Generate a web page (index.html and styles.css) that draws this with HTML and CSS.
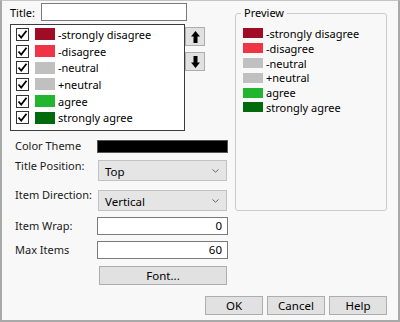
FILE: index.html
```html
<!DOCTYPE html>
<html lang="en">
<head>
    <meta charset="UTF-8">
    <title>Legend Settings</title>
    <link rel="stylesheet" href="styles.css">
</head>
<body>
    <div class="window">
        <div class="main">
            <div class="left">
                <div class="title-row">
                    <span class="title-lbl">Title:</span>
                    <span class="field title-field"></span>
                </div>
                <div class="list-row">
                    <div class="listbox">
                        <div class="item"><span class="check"><svg width="11" height="11" viewBox="0 0 11 11"><path d="M1.5 5.5 L4.2 8.5 L9.5 1.8" fill="none" stroke="#000" stroke-width="1.8"/></svg></span><span class="swatch c1"></span>-strongly disagree</div>
                        <div class="item"><span class="check"><svg width="11" height="11" viewBox="0 0 11 11"><path d="M1.5 5.5 L4.2 8.5 L9.5 1.8" fill="none" stroke="#000" stroke-width="1.8"/></svg></span><span class="swatch c2"></span>-disagree</div>
                        <div class="item"><span class="check"><svg width="11" height="11" viewBox="0 0 11 11"><path d="M1.5 5.5 L4.2 8.5 L9.5 1.8" fill="none" stroke="#000" stroke-width="1.8"/></svg></span><span class="swatch c3"></span>-neutral</div>
                        <div class="item"><span class="check"><svg width="11" height="11" viewBox="0 0 11 11"><path d="M1.5 5.5 L4.2 8.5 L9.5 1.8" fill="none" stroke="#000" stroke-width="1.8"/></svg></span><span class="swatch c3"></span>+neutral</div>
                        <div class="item"><span class="check"><svg width="11" height="11" viewBox="0 0 11 11"><path d="M1.5 5.5 L4.2 8.5 L9.5 1.8" fill="none" stroke="#000" stroke-width="1.8"/></svg></span><span class="swatch c5"></span>agree</div>
                        <div class="item"><span class="check"><svg width="11" height="11" viewBox="0 0 11 11"><path d="M1.5 5.5 L4.2 8.5 L9.5 1.8" fill="none" stroke="#000" stroke-width="1.8"/></svg></span><span class="swatch c6"></span>strongly agree</div>
                    </div>
                    <div class="arrows">
                        <span class="btn arrow"><svg width="9" height="12" viewBox="0 0 9 12"><path d="M4.5 0 L9 5.5 H6.5 V12 H2.5 V5.5 H0 Z" fill="#000"/></svg></span>
                        <span class="btn arrow"><svg width="9" height="12" viewBox="0 0 9 12"><path d="M4.5 12 L9 6.5 H6.5 V0 H2.5 V6.5 H0 Z" fill="#000"/></svg></span>
                    </div>
                </div>
                <div class="form">
                    <div class="row r-theme">
                        <span class="lbl">Color Theme</span>
                        <span class="theme-bar"></span>
                    </div>
                    <div class="row r-select r-pos">
                        <span class="lbl">Title Position:</span>
                        <span class="select">Top<svg width="7" height="4" viewBox="0 0 7 4"><path d="M0.5 0.5 L3.5 3.2 L6.5 0.5" fill="none" stroke="#666" stroke-width="1"/></svg></span>
                    </div>
                    <div class="row r-select r-dir">
                        <span class="lbl">Item Direction:</span>
                        <span class="select">Vertical<svg width="7" height="4" viewBox="0 0 7 4"><path d="M0.5 0.5 L3.5 3.2 L6.5 0.5" fill="none" stroke="#666" stroke-width="1"/></svg></span>
                    </div>
                    <div class="row r-wrap">
                        <span class="lbl">Item Wrap:</span>
                        <span class="field num">0</span>
                    </div>
                    <div class="row r-max">
                        <span class="lbl">Max Items</span>
                        <span class="field num">60</span>
                    </div>
                    <div class="row r-font">
                        <span class="btn font-btn">Font...</span>
                    </div>
                </div>
            </div>
            <fieldset class="preview">
                <legend>Preview</legend>
                <div class="pitem"><span class="pswatch c1"></span>-strongly disagree</div>
                <div class="pitem"><span class="pswatch c2"></span>-disagree</div>
                <div class="pitem"><span class="pswatch c3"></span>-neutral</div>
                <div class="pitem"><span class="pswatch c3"></span>+neutral</div>
                <div class="pitem"><span class="pswatch c5"></span>agree</div>
                <div class="pitem"><span class="pswatch c6"></span>strongly agree</div>
            </fieldset>
        </div>
        <div class="buttons">
            <span class="btn dlg">OK</span>
            <span class="btn dlg">Cancel</span>
            <span class="btn dlg">Help</span>
        </div>
    </div>
</body>
</html>
```

FILE: styles.css
```css
*{
    margin: 0;
    padding: 0;
    box-sizing: border-box;
}
body{
    font-family: "Noto Sans", "Open Sans", sans-serif;
    font-size: 11px;
    color: #000;
    background: #fff;
}
.window{
    width: 400px;
    height: 322px;
    background: #f8f8f8;
    border: 2px solid #a9a9a9;
    border-top: 1px solid #c4c4c4;
    display: flex;
    flex-direction: column;
}
.main{
    display: flex;
    align-items: flex-start;
}
.left{
    width: 233px;
}
/* title */
.title-row{
    display: flex;
    align-items: center;
    padding-top: 2px;
    padding-left: 8px;
}
.title-lbl{
    width: 31px;
}
.field{
    display: block;
    height: 18px;
    background: #fff;
    border: 1px solid #7a7a7a;
}
.title-field{
    width: 146px;
}
/* list */
.list-row{
    display: flex;
    margin-top: 3px;
    padding-left: 8px;
}
.listbox{
    width: 175px;
    height: 107px;
    background: #fff;
    border: 1px solid #3c3c3c;
    padding: 1px 0 0 5px;
}
.item{
    display: flex;
    align-items: center;
    height: 16.7px;
    white-space: nowrap;
}
.check{
    width: 13px;
    height: 13px;
    border: 1px solid #333;
    background: #fff;
    display: flex;
    align-items: center;
    justify-content: center;
    margin-right: 6px;
}
.swatch{
    width: 20px;
    height: 12px;
    margin-right: 3px;
}
.c1{ background: #9e0c25; }
.c2{ background: #ef3446; }
.c3{ background: #c0c0c0; }
.c5{ background: #22b530; }
.c6{ background: #006a0c; }
.arrows{
    display: flex;
    flex-direction: column;
    gap: 6px;
    margin-top: 3px;
}
.btn{
    display: flex;
    align-items: center;
    justify-content: center;
    background: #e1e1e1;
    border: 1px solid #adadad;
}
.arrow{
    width: 20px;
    height: 19px;
}
/* form */
.form{
    margin-top: 8px;
    padding-left: 13px;
}
.row{
    display: flex;
    align-items: center;
}
.lbl{
    width: 82px;
    line-height: 12px;
    color: #1a1a1a;
}
.r-theme{ height: 14px; }
.theme-bar{
    width: 131px;
    height: 13px;
    background: #000;
    border: 1px solid #555;
}
.r-select{
    align-items: flex-start;
}
.r-pos{ margin-top: 7px; }
.r-dir{ margin-top: 9px; }
.r-dir .lbl{ margin-top: -1px; }
.select{
    display: flex;
    align-items: center;
    justify-content: space-between;
    width: 129px;
    height: 21px;
    margin-left: 1px;
    padding: 1px 7px 0 6px;
    background: #e5e5e5;
    border: 1px solid #c2c2c2;
    font-size: 11.5px;
}
.r-wrap{ margin-top: 6px; }
.r-max{ margin-top: 6px; }
.num{
    width: 131px;
    text-align: right;
    padding-right: 5px;
    line-height: 16px;
    font-size: 11.5px;
}
.r-max .num{ height: 18px; }
.r-font{
    margin-top: 7px;
    padding-left: 84px;
}
.font-btn{
    width: 128px;
    height: 19px;
    font-size: 11.5px;
}
/* preview */
.preview{
    width: 152px;
    height: 206px;
    margin-top: 4px;
    border: 1px solid #cbcbcb;
    border-radius: 3px;
    padding: 5px 0 0 5px;
}
.preview legend{
    padding: 0 3px;
    line-height: 16px;
    margin-left: 0;
}
.pitem{
    display: flex;
    align-items: center;
    height: 14.8px;
    padding-left: 2px;
    white-space: nowrap;
}
.pswatch{
    width: 20px;
    height: 10px;
    margin-right: 3px;
}
/* dialog buttons */
.buttons{
    margin-top: auto;
    display: flex;
    justify-content: flex-end;
    gap: 4px;
    padding: 0 11px 5px 0;
}
.dlg{
    width: 58px;
    height: 19px;
    font-size: 11.5px;
}
```
